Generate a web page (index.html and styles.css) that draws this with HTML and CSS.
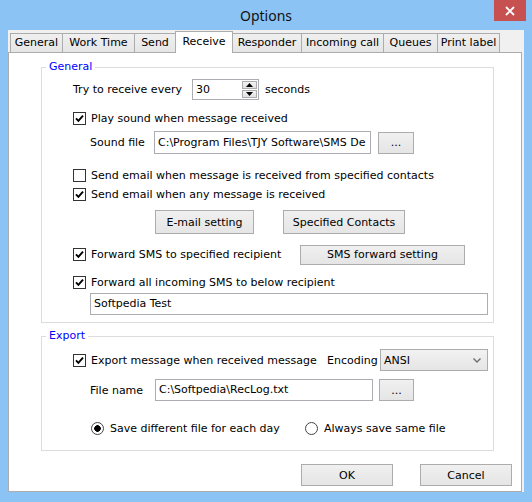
FILE: index.html
```html
<!DOCTYPE html>
<html lang="en">

<head>
    <meta charset="UTF-8">
    <meta name="viewport" content="width=device-width, initial-scale=1.0">
    <title>Options</title>
    <link rel="stylesheet" href="styles.css">
</head>

<body>
    <div class="window">
        <!-- 标题栏 -->
        <div class="titlebar">
            <span></span>
            <span class="title">Options</span>
            <span class="close">
                <svg width="12" height="12" viewBox="0 0 12 12">
                    <path d="M2 2 L10 10 M10 2 L2 10" stroke="#fff" stroke-width="1.8" fill="none" />
                </svg>
            </span>
        </div>

        <div class="client">
            <ul class="tabs">
                <li>General</li>
                <li>Work Time</li>
                <li>Send</li>
                <li class="active">Receive</li>
                <li>Responder</li>
                <li>Incoming call</li>
                <li>Queues</li>
                <li>Print label</li>
            </ul>

            <div class="panel">
                <fieldset class="group group-general">
                    <legend>General</legend>

                    <div class="row ind1 r-spin">
                        <span class="lbl-every">Try to receive every</span>
                        <div class="spin">
                            <span class="spin-val">30</span>
                            <div class="spin-btns">
                                <span><svg width="7" height="4" viewBox="0 0 7 4"><path d="M0 4 L3.5 0 L7 4 Z" fill="#000" /></svg></span>
                                <span><svg width="7" height="4" viewBox="0 0 7 4"><path d="M0 0 L3.5 4 L7 0 Z" fill="#000" /></svg></span>
                            </div>
                        </div>
                        <span class="unit">seconds</span>
                    </div>

                    <div class="row ind1 r-sound">
                        <label class="chk"><span class="box"><svg width="11" height="11" viewBox="0 0 11 11"><path d="M2 5.3 L4.4 7.8 L9 2.6" /></svg></span>Play sound when message received</label>
                    </div>

                    <div class="row ind2 r-file">
                        <span class="lbl-file">Sound file</span>
                        <span class="field field-sound">C:\Program Files\TJY Software\SMS De</span>
                        <button class="btn btn-dots">...</button>
                    </div>

                    <div class="row ind1 r-mail1">
                        <label class="chk"><span class="box"></span>Send email when message is received from specified contacts</label>
                    </div>

                    <div class="row ind1 r-mail2">
                        <label class="chk"><span class="box"><svg width="11" height="11" viewBox="0 0 11 11"><path d="M2 5.3 L4.4 7.8 L9 2.6" /></svg></span>Send email when any message is received</label>
                    </div>

                    <div class="row r-mailbtns">
                        <button class="btn btn-mail">E-mail setting</button>
                        <button class="btn btn-contacts">Specified Contacts</button>
                    </div>

                    <div class="row ind1 r-fwd">
                        <label class="chk chk-fwd"><span class="box"><svg width="11" height="11" viewBox="0 0 11 11"><path d="M2 5.3 L4.4 7.8 L9 2.6" /></svg></span>Forward SMS to specified recipient</label>
                        <button class="btn btn-fwd">SMS forward setting</button>
                    </div>

                    <div class="row ind1 r-fwdall">
                        <label class="chk"><span class="box"><svg width="11" height="11" viewBox="0 0 11 11"><path d="M2 5.3 L4.4 7.8 L9 2.6" /></svg></span>Forward all incoming SMS to below recipient</label>
                    </div>

                    <div class="row ind2 r-recipient">
                        <span class="field field-recipient">Softpedia Test</span>
                    </div>
                </fieldset>

                <fieldset class="group group-export">
                    <legend>Export</legend>

                    <div class="row ind1 r-export">
                        <label class="chk chk-export"><span class="box"><svg width="11" height="11" viewBox="0 0 11 11"><path d="M2 5.3 L4.4 7.8 L9 2.6" /></svg></span>Export message when received message</label>
                        <span class="lbl-enc">Encoding</span>
                        <div class="combo">
                            <span>ANSI</span>
                            <svg width="8" height="5" viewBox="0 0 8 5"><path d="M0.5 0.5 L4 4 L7.5 0.5" stroke="#6d6d6d" stroke-width="1.4" fill="none" /></svg>
                        </div>
                    </div>

                    <div class="row ind2 r-filename">
                        <span class="lbl-name">File name</span>
                        <span class="field field-name">C:\Softpedia\RecLog.txt</span>
                        <button class="btn btn-dots2">...</button>
                    </div>

                    <div class="row r-radios">
                        <label class="rad rad-first"><span class="radio on"></span>Save different file for each day</label>
                        <label class="rad"><span class="radio"></span>Always save same file</label>
                    </div>
                </fieldset>

                <div class="actions">
                    <button class="btn btn-ok">OK</button>
                    <button class="btn btn-cancel">Cancel</button>
                </div>
            </div>
        </div>
    </div>
</body>

</html>
```

FILE: styles.css
```css
* {
    margin: 0;
    padding: 0;
    box-sizing: border-box;
    list-style: none;
}

html,
body {
    width: 100%;
    height: 100%;
}

body {
    font-family: "DejaVu Sans", sans-serif;
    font-size: 11px;
    color: #000;
    background: #8bc3f5;
}

.window {
    width: 532px;
    height: 502px;
    background: #8bc3f5;
}

/* 标题栏 */
.titlebar {
    height: 30px;
    display: grid;
    grid-template-columns: 1fr auto 1fr;
    align-items: start;
}

.title {
    font-family: "Noto Sans", sans-serif;
    font-size: 14px;
    line-height: 31px;
    color: #111;
}

.close {
    justify-self: end;
    width: 32px;
    height: 21px;
    margin-right: 6px;
    background: #c75050;
    display: flex;
    align-items: center;
    justify-content: center;
}

.client {
    width: 516px;
    height: 462px;
    margin-left: 8px;
    background: #f0f0f0;
}

/* 选项卡 */
.tabs {
    display: flex;
    align-items: flex-end;
    height: 22px;
    padding-left: 2px;
}

.tabs li {
    height: 19px;
    line-height: 18px;
    text-align: center;
    white-space: nowrap;
    border: solid 1px #acacac;
    border-bottom: none;
    margin-right: -1px;
    background: linear-gradient(#f0f0f0, #e5e5e5);
}

.tabs li:nth-child(1) { width: 53px; }
.tabs li:nth-child(2) { width: 73px; }
.tabs li:nth-child(3) { width: 42px; }
.tabs li:nth-child(4) { width: 58px; }
.tabs li:nth-child(5) { width: 70px; }
.tabs li:nth-child(6) { width: 83px; }
.tabs li:nth-child(7) { width: 55px; }
.tabs li:nth-child(8) { width: 63px; }

.tabs li.active {
    position: relative;
    z-index: 1;
    height: 22px;
    line-height: 20px;
    margin-bottom: -1px;
    background: #fff;
}

.panel {
    width: 514px;
    height: 440px;
    border: solid 1px #acacac;
    background: #fff;
}

/* 分组框 */
.group {
    width: 453px;
    margin-left: 32px;
    border: solid 1px #dcdcdc;
}

.group legend {
    margin-left: 4px;
    padding: 0 3px;
    line-height: 14px;
    color: #0000ff;
}

.group-general {
    margin-top: 7px;
    padding-bottom: 7px;
}

.group-export {
    margin-top: 6px;
    padding-bottom: 13px;
}

.row {
    display: flex;
    align-items: center;
    white-space: nowrap;
}

.ind1 {
    padding-left: 31px;
}

.ind2 {
    padding-left: 48px;
}

.r-spin { margin-top: 5px; height: 21px; }
.r-sound { margin-top: 9px; height: 18px; }
.r-file { margin-top: 4px; height: 23px; }
.r-mail1 { margin-top: 12px; height: 18px; }
.r-mail2 { margin-top: 1px; height: 18px; }
.r-mailbtns { margin-top: 7px; height: 24px; padding-left: 113px; }
.r-fwd { margin-top: 10px; height: 21px; }
.r-fwdall { margin-top: 8px; height: 18px; }
.r-recipient { margin-top: 2px; height: 22px; }

.r-export { margin-top: 6px; height: 22px; }
.r-filename { margin-top: 8px; height: 22px; }
.r-radios { margin-top: 18px; height: 18px; padding-left: 49px; }

/* 数字框 */
.lbl-every {
    width: 119px;
}

.spin {
    display: flex;
    width: 67px;
    height: 21px;
    border: solid 1px #abadb3;
    background: #fff;
}

.spin-val {
    flex: 1;
    padding-left: 3px;
    line-height: 19px;
}

.spin-btns {
    display: flex;
    flex-direction: column;
    justify-content: space-between;
    width: 16px;
    padding: 1px 1px 1px 0;
}

.spin-btns span {
    height: 8px;
    display: flex;
    align-items: center;
    justify-content: center;
    border: solid 1px #acacac;
    background: linear-gradient(#f2f2f2, #e2e2e2);
}

.unit {
    margin-left: 6px;
}

/* 复选框 / 单选框 */
.chk,
.rad {
    display: flex;
    align-items: center;
    gap: 5px;
}

.box {
    width: 13px;
    height: 13px;
    border: solid 1px #333;
    background: #fff;
    display: flex;
    align-items: center;
    justify-content: center;
}

.box svg path {
    fill: none;
    stroke: #000;
    stroke-width: 1.9;
}

.chk-fwd {
    width: 227px;
}

.chk-export {
    width: 254px;
}

.rad {
    gap: 6px;
}

.rad-first {
    width: 214px;
}

.radio {
    width: 13px;
    height: 13px;
    border: solid 1px #444;
    border-radius: 50%;
    background: #fff;
}

.radio.on {
    background: radial-gradient(circle, #000 0 3px, #fff 3.6px);
}

/* 文本框 */
.field {
    height: 22px;
    line-height: 20px;
    padding: 0 3px;
    border: solid 1px #abadb3;
    background: #fff;
    overflow: hidden;
}

.lbl-file {
    width: 64px;
}

.field-sound {
    width: 217px;
    height: 23px;
    line-height: 21px;
}

.field-recipient {
    width: 398px;
}

.lbl-name {
    width: 65px;
}

.field-name {
    width: 218px;
}

.lbl-enc {
    width: 53px;
}

.combo {
    width: 108px;
    height: 22px;
    display: flex;
    align-items: center;
    justify-content: space-between;
    padding: 0 6px 0 3px;
    border: solid 1px #acacac;
    background: linear-gradient(#f2f2f2, #e5e5e5);
}

/* 按钮 */
.btn {
    font: inherit;
    font-weight: normal;
    color: #000;
    height: 22px;
    border: solid 1px #acacac;
    background: linear-gradient(#f0f0f0, #e5e5e5);
    text-align: center;
}

.btn-dots {
    width: 36px;
    margin-left: 7px;
}

.btn-dots2 {
    width: 35px;
    margin-left: 6px;
}

.btn-mail {
    width: 99px;
    height: 24px;
}

.btn-contacts {
    width: 122px;
    height: 24px;
    margin-left: 29px;
}

.btn-fwd {
    width: 165px;
    height: 20px;
}

.actions {
    display: flex;
    justify-content: flex-end;
    gap: 27px;
    margin-top: 13px;
    padding-right: 9px;
}

.btn-ok,
.btn-cancel {
    width: 92px;
    height: 22px;
}
```
